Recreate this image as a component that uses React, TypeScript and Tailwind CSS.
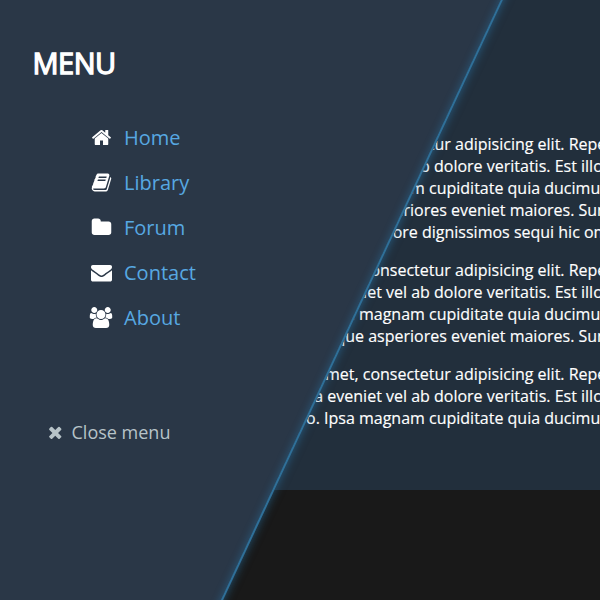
import React from 'react';

const icons = {
  home: 'M1472 992v480q0 26-19 45t-45 19h-384v-384h-256v384h-384q-26 0-45-19t-19-45v-480q0-1 .5-3t.5-3l575-474 575 474q1 2 1 6zm223-69l-62 74q-8 9-21 11h-3q-13 0-21-7l-692-577-692 577q-12 8-24 7-13-2-21-11l-62-74q-8-10-7-23.5t11-21.5l719-599q32-26 76-26t76 26l244 204v-195q0-14 9-23t23-9h192q14 0 23 9t9 23v408l219 182q10 8 11 21.5t-7 23.5z',
  book: 'M1703 478q40 57 18 129l-275 906q-19 64-76.5 107.5t-122.5 43.5h-923q-77 0-148.5-53.5t-99.5-131.5q-24-67-2-127 0-4 3-27t4-37q1-8-3-21.5t-3-19.5q2-11 8-21t16.5-23.5 16.5-23.5q23-38 45-91.5t30-91.5q3-10 .5-30t-.5-28q3-11 17-28t17-23q21-36 42-92t25-90q1-9-2.5-32t.5-28q4-13 22-30.5t22-22.5q19-26 42.5-84.5t27.5-96.5q1-8-3-25.5t-2-26.5q2-8 9-18t18-23 17-21q8-12 16.5-30.5t15-35 16-36 19.5-32 26.5-23.5 36-11.5 47.5 5.5l-1 3q38-9 51-9h761q74 0 114 56t18 130l-274 906q-36 119-71.5 153.5t-128.5 34.5h-869q-27 0-38 15-11 16-1 43 24 70 144 70h923q29 0 56-15.5t35-41.5l300-987q7-22 5-57 38 15 59 43zm-1064 2q-4 13 2 22.5t20 9.5h608q13 0 25.5-9.5t16.5-22.5l21-64q4-13-2-22.5t-20-9.5h-608q-13 0-25.5 9.5t-16.5 22.5zm-83 256q-4 13 2 22.5t20 9.5h608q13 0 25.5-9.5t16.5-22.5l21-64q4-13-2-22.5t-20-9.5h-608q-13 0-25.5 9.5t-16.5 22.5z',
  folder: 'M1728 608v704q0 92-66 158t-158 66h-1216q-92 0-158-66t-66-158v-960q0-92 66-158t158-66h320q92 0 158 66t66 158v32h672q92 0 158 66t66 158z',
  envelope: 'M1792 710v794q0 66-47 113t-113 47h-1472q-66 0-113-47t-47-113v-794q44 49 101 87 362 246 497 345 57 42 92.5 65.5t94.5 48 110 24.5h2q51 0 110-24.5t94.5-48 92.5-65.5q170-123 498-345 57-39 100-87zm0-294q0 79-49 151t-122 123q-376 261-468 325-10 7-42.5 31t-54 38.5-52 32.5-57.5 27-50 9h-2q-23 0-50-9t-57.5-27-52-32.5-54-38.5-42.5-31q-91-64-262-182.5t-205-142.5q-62-42-117-115.5t-55-136.5q0-78 41.5-130t118.5-52h1472q65 0 112.5 47t47.5 113z',
  users: 'M657 896q-162 5-265 128h-134q-82 0-138-40.5t-56-118.5q0-353 124-353 6 0 43.5 21t97.5 42.5 119 21.5q67 0 133-23-5 37-5 66 0 139 81 256zm1071 637q0 120-73 189.5t-194 69.5h-874q-121 0-194-69.5t-73-189.5q0-53 3.5-103.5t14-109 26.5-108.5 43-97.5 62-81 85.5-53.5 111.5-20q10 0 43 21.5t73 48 107 48 135 21.5 135-21.5 107-48 73-48 43-21.5q61 0 111.5 20t85.5 53.5 62 81 43 97.5 26.5 108.5 14 109 3.5 103.5zm-1024-1277q0 106-75 181t-181 75-181-75-75-181 75-181 181-75 181 75 75 181zm704 384q0 159-112.5 271.5t-271.5 112.5-271.5-112.5-112.5-271.5 112.5-271.5 271.5-112.5 271.5 112.5 112.5 271.5zm576 225q0 78-56 118.5t-138 40.5h-134q-103-123-265-128 81-117 81-256 0-29-5-66 66 23 133 23 59 0 119-21.5t97.5-42.5 43.5-21q124 0 124 353zm-128-609q0 106-75 181t-181 75-181-75-75-181 75-181 181-75 181 75 75 181z',
  times: 'M1490 1322q0 40-28 68l-136 136q-28 28-68 28t-68-28l-294-294-294 294q-28 28-68 28t-68-28l-136-136q-28-28-28-68t28-68l294-294-294-294q-28-28-28-68t28-68l136-136q28-28 68-28t68 28l294 294 294-294q28-28 68-28t68 28l136 136q28 28 28 68t-28 68l-294 294 294 294q28 28 28 68z',
};

type IconName = keyof typeof icons;

function Icon({ name, className }: { name: IconName; className: string }) {
  return (
    <svg viewBox={name === 'users' ? '0 0 2048 1792' : '0 0 1792 1792'} className={className} fill="currentColor" aria-hidden="true">
      <path d={icons[name]} />
    </svg>
  );
}

const menu: { icon: IconName; label: string; size: string }[] = [
  { icon: 'home', label: 'Home', size: 'h-[21px] w-[21px]' },
  { icon: 'book', label: 'Library', size: 'h-[21px] w-[21px]' },
  { icon: 'folder', label: 'Forum', size: 'h-[21px] w-[21px]' },
  { icon: 'envelope', label: 'Contact', size: 'h-[21px] w-[21px]' },
  { icon: 'users', label: 'About', size: 'h-[21px] w-[24px]' },
];

// Each line is split at a word boundary; the first part is set flush right against the second.
const lines = [
  { head: 'amet, consectetur', tail: 'adipisicing elit. Repellendus', width: 'w-[455px]' },
  { head: 'quia eveniet vel ab', tail: 'dolore veritatis. Est illo', width: 'w-[434px]' },
  { head: 'explicabo. Ipsa magnam', tail: 'cupiditate quia ducimus', width: 'w-[429px]' },
  { head: 'eaque asperiores', tail: 'eveniet maiores. Sunt', width: 'w-[451px]' },
  { head: 'labore', tail: 'dignissimos sequi hic omnis', width: 'w-[422px]' },
];

function Paragraph({ count }: { count: number }) {
  return (
    <div>
      {lines.slice(0, count).map((line) => (
        <div key={line.head} className="flex">
          <span className={`${line.width} shrink-0 whitespace-pre text-right`}>{line.head + ' '}</span>
          <span>{line.tail}</span>
        </div>
      ))}
    </div>
  );
}

export default function App() {
  return (
    <div className="relative h-[600px] w-[600px] overflow-hidden bg-[#191919] font-['Open_Sans',sans-serif]">
      <main className="flex h-[490px] flex-col gap-4 whitespace-nowrap bg-[#222f3c] pt-[133px] text-[16px] leading-[22px] text-white [-webkit-text-stroke:0.15px_white]">
        <Paragraph count={5} />
        <Paragraph count={4} />
        <Paragraph count={3} />
      </main>
      <div className="absolute -left-[437.5px] -top-[200px] h-[1000px] w-[800px] origin-right rotate-[25deg] border-r-2 border-[#2f7099] bg-[#2a3747] shadow-[0_0_10px_#2980b990,inset_-2px_0_7px_#2980b94d]" />
      <nav className="absolute left-0 top-0 flex flex-col">
        <h1 className="pl-[32.5px] pt-[43px] text-[29px] font-normal leading-10 tracking-[-0.5px] text-white [-webkit-text-stroke:1.3px_white]">MENU</h1>
        <ul className="flex flex-col pl-[89.5px] pt-[32px]">
          {menu.map((item) => (
            <li key={item.label} className="flex h-[45px] items-center">
              <span className="flex w-[34.5px] text-white">
                <span className="flex w-[23px] shrink-0 justify-center">
                  <Icon name={item.icon} className={`${item.size} shrink-0`} />
                </span>
              </span>
              <a className="text-[20px] leading-[27px] text-[#57a8e2]">{item.label}</a>
            </li>
          ))}
        </ul>
        <a className="flex items-center pl-[46px] pt-[80px] text-[18px] leading-[25px] text-[#b7c3c8]">
          <Icon name="times" className="mr-[7px] h-[18.5px] w-[18.5px]" />
          Close menu
        </a>
      </nav>
    </div>
  );
}
